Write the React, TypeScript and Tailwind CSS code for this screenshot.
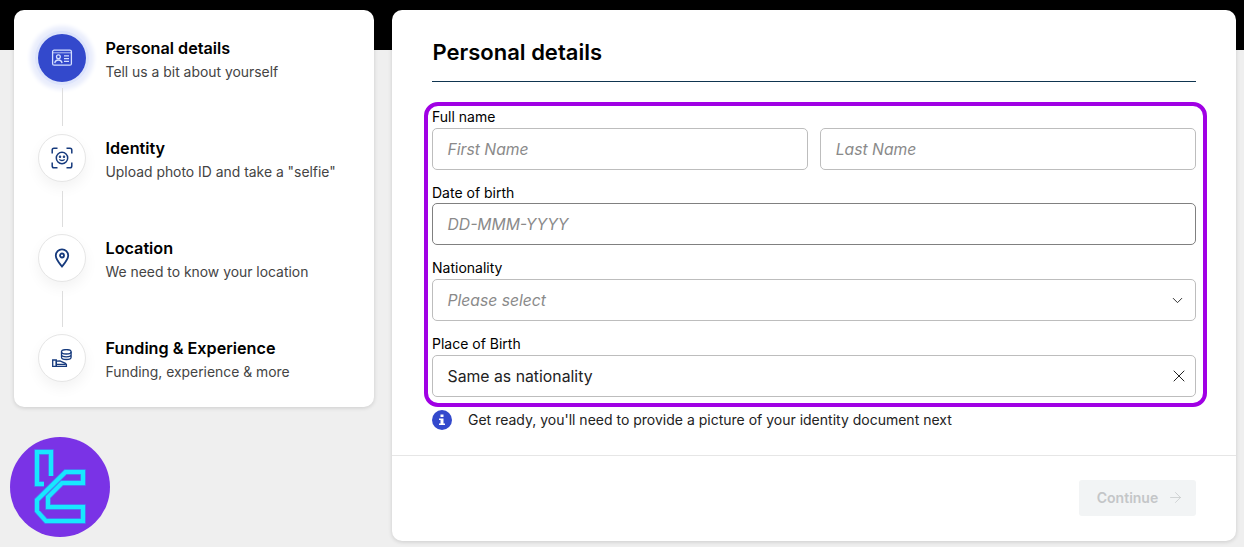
import React from "react";
import { ChevronDown, X, ArrowRight } from "lucide-react";

const font = { fontFamily: "Inter, 'Liberation Sans', sans-serif" };

function IdIcon() {
  return (
    <svg width="22" height="18" viewBox="0 0 22 18" fill="none" stroke="#d5e0ff" strokeWidth="1.300">
      <rect x="1.600" y="1.200" width="18.800" height="15" rx="1.500" />
      <path d="M1.600 3.800h18.800" strokeWidth="0.800" />
      <circle cx="7.400" cy="7.800" r="1.900" />
      <path d="M3.800 14.200c.3-2.400 1.900-3.200 3.600-3.200s3.300.8 3.600 3.200" />
      <path d="M13 6.800h5M13 9.600h5M13 12.400h5" />
    </svg>
  );
}

function FaceIcon() {
  return (
    <svg width="22" height="22" viewBox="0 0 22 22" fill="none" stroke="#163a7d" strokeWidth="1.500">
      <path d="M1.200 6.500V3A1.800 1.800 0 0 1 3 1.200h3.500M15.500 1.200H19A1.800 1.800 0 0 1 20.800 3v3.500M1.200 15.500V19A1.800 1.800 0 0 0 3 20.800h3.500M15.500 20.800H19a1.800 1.800 0 0 0 1.800-1.800v-3.500" />
      <circle cx="11" cy="11" r="5.700" />
      <circle cx="9" cy="9.800" r=".5" />
      <circle cx="13" cy="9.800" r=".5" />
      <path d="M8.400 12.400c1.200 1.500 4 1.500 5.200 0" />
    </svg>
  );
}

function PinIcon() {
  return (
    <svg width="16" height="20" viewBox="0 0 16 20" fill="none" stroke="#163a7d" strokeWidth="1.800">
      <path d="M8 18.500C5 14.800 1.800 11.500 1.800 7.600a6.200 6.200 0 0 1 12.400 0c0 3.900-3.200 7.200-6.200 10.900z" />
      <circle cx="8" cy="7.500" r="2" />
    </svg>
  );
}

function CoinsIcon() {
  return (
    <svg width="20" height="18" viewBox="0 0 20 18" fill="none" stroke="#163a7d" strokeWidth="1.300">
      <ellipse cx="14.300" cy="2.800" rx="4.800" ry="2.200" />
      <path d="M9.500 2.800v5.400c0 1.300 2.100 2.300 4.800 2.300s4.800-1 4.800-2.300V2.800M9.500 5.500c0 1.300 2.100 2.300 4.800 2.300s4.800-1 4.800-2.300" />
      <path d="M.7 11h3.600v6.300H.7z" />
      <path d="M4.300 12.200l3.700-.4 5.400 2.600 1 1v1.900H4.300z" />
      <path d="M4.300 15.400h9.500" />
    </svg>
  );
}

function Logo() {
  const a = "M41 39V15H27V47H34";
  const b = "M55.500 35H73V46H52L38 60V70H73V84H36L27 74V63Z";
  return (
    <svg width="100" height="100" viewBox="0 0 100 100" className="block">
      <circle cx="50" cy="50" r="50" fill="#7a33e6" />
      <g fill="none" strokeLinejoin="miter" stroke="#3f8cf5" strokeWidth="5.400">
        <path d={a} />
        <path d={b} />
      </g>
      <g fill="none" strokeLinejoin="miter" stroke="#17e8ff" strokeWidth="4">
        <path d={a} />
        <path d={b} />
      </g>
    </svg>
  );
}

const steps = [
  { title: "Personal details", sub: "Tell us a bit about yourself", icon: <IdIcon />, active: true },
  { title: "Identity", sub: 'Upload photo ID and take a "selfie"', icon: <FaceIcon /> },
  { title: "Location", sub: "We need to know your location", icon: <PinIcon /> },
  { title: "Funding & Experience", sub: "Funding, experience & more", icon: <CoinsIcon /> },
];

function Step({ s, last }: { s: (typeof steps)[number]; last: boolean }) {
  return (
    <div className={last ? "flex h-[48px]" : "flex h-[100px]"}>
      <div className="flex w-[48px] flex-col items-center">
        {s.active ? (
          <div className="flex h-[48px] w-[48px] shrink-0 items-center justify-center rounded-full bg-[#3349cc] shadow-[0_0_0_3px_#dde4fb,0_0_4px_8px_#e9edfc]">
            {s.icon}
          </div>
        ) : (
          <div className="flex h-[48px] w-[48px] shrink-0 items-center justify-center rounded-full border border-[#e6e6e6] bg-white shadow-[0_6px_14px_rgba(0,0,0,0.05)]">
            {s.icon}
          </div>
        )}
        {!last && <div className={s.active ? "mt-[6px] h-[38px] w-px bg-[#dddddd]" : "mt-[9px] h-[36px] w-px bg-[#dddddd]"} />}
      </div>
      <div className="ml-[19.500px] pt-[4px]">
        <div className="text-[16.200px] leading-[20px] font-semibold text-black">{s.title}</div>
        <div className="mt-[4px] text-[13.900px] leading-[20px] text-[#444444]">{s.sub}</div>
      </div>
    </div>
  );
}

function Field({ children, trailing, className }: { children: React.ReactNode; trailing?: React.ReactNode; className?: string }) {
  return (
    <div className={"flex h-[42px] items-center justify-between rounded-[5px] border bg-white pl-[14.500px] " + (className ?? "border-[#bdbdbd]")}>
      {children}
      {trailing}
    </div>
  );
}

function Placeholder({ children }: { children: React.ReactNode }) {
  return <span className="pt-[1px] text-[15.700px] italic text-[#8a8a8a]">{children}</span>;
}

function Label({ children, className }: { children: React.ReactNode; className?: string }) {
  return <div className={"h-[18px] text-[14px] text-black " + (className ?? "leading-[14px]")}>{children}</div>;
}

export default function App() {
  return (
    <div className="relative h-[547px] w-[1244px] overflow-hidden bg-[#efefef]" style={font}>
      <div className="h-[50px] bg-black" />
      <div className="mt-[-40px] flex items-start pl-[14px]">
        <aside className="w-[360px] shrink-0">
          <div className="h-[397px] rounded-[10px] bg-white pl-[24px] pt-[24px] shadow-[0_1px_4px_rgba(0,0,0,0.15)]">
            {steps.map((s, i) => (
              <Step key={s.title} s={s} last={i === steps.length - 1} />
            ))}
          </div>
          <div className="ml-[-4px] mt-[30px]">
            <Logo />
          </div>
        </aside>
        <main className="ml-[18px] flex h-[531px] w-[844px] shrink-0 flex-col rounded-[10px] bg-white shadow-[0_1px_4px_rgba(0,0,0,0.15)]">
          <div className="relative px-[40px] pt-[28px]">
            <h1 className="h-[43px] pl-[0.500px] text-[22px] leading-[28px] font-semibold text-black">Personal details</h1>
            <div className="h-px bg-[#0f3550]" />
            <div className="mt-[28px] flex flex-col">
              <div>
                <Label>Full name</Label>
                <div className="grid grid-cols-2 gap-[12.500px]">
                  <Field><Placeholder>First Name</Placeholder></Field>
                  <Field><Placeholder>Last Name</Placeholder></Field>
                </div>
              </div>
              <div className="mt-[15px]">
                <Label className="leading-[16px]">Date of birth</Label>
                <Field className="border-[#808080]"><Placeholder>DD-MMM-YYYY</Placeholder></Field>
              </div>
              <div className="mt-[16px]">
                <Label>Nationality</Label>
                <Field trailing={<ChevronDown size={17} strokeWidth={1.300} color="#222222" className="mr-[9px]" />}><Placeholder>Please select</Placeholder></Field>
              </div>
              <div className="mt-[16px]">
                <Label>Place of Birth</Label>
                <Field trailing={<X size={20} strokeWidth={1.200} color="#222222" className="mr-[6px]" />}>
                  <span className="pt-[1px] text-[15.800px] text-[#222222]">Same as nationality</span>
                </Field>
              </div>
            </div>
            <div className="mt-[13px] flex items-center">
              <span className="flex h-[20px] w-[20px] items-center justify-center rounded-full bg-[#3349cc]">
                <svg width="8" height="12" viewBox="0 0 8 12" fill="#ffffff">
                  <rect x="2.500" y="0.500" width="3" height="2.500" />
                  <path d="M1 4.500h4.500v5H7V11H1V9.500h1.500V6H1z" />
                </svg>
              </span>
              <span className="ml-[16px] text-[14px] leading-[20px] text-[#222222]">Get ready, you'll need to provide a picture of your identity document next</span>
            </div>
            <div className="pointer-events-none absolute left-[32px] top-[92px] h-[305px] w-[783px] rounded-[14px] border-[4px] border-[#a000e4]" />
          </div>
          <div className="mt-[25px] flex flex-1 items-start justify-end border-t border-[#e6e6e6] px-[40px] pt-[24px]">
            <button className="flex h-[36px] w-[117px] items-center justify-center gap-[9px] rounded-[3px] bg-[#f2f4f5] pb-[2px] pl-[6px] text-[14px] font-semibold text-[#c4c6c8]">
              Continue
              <ArrowRight size={17} strokeWidth={1} />
            </button>
          </div>
        </main>
      </div>
    </div>
  );
}
